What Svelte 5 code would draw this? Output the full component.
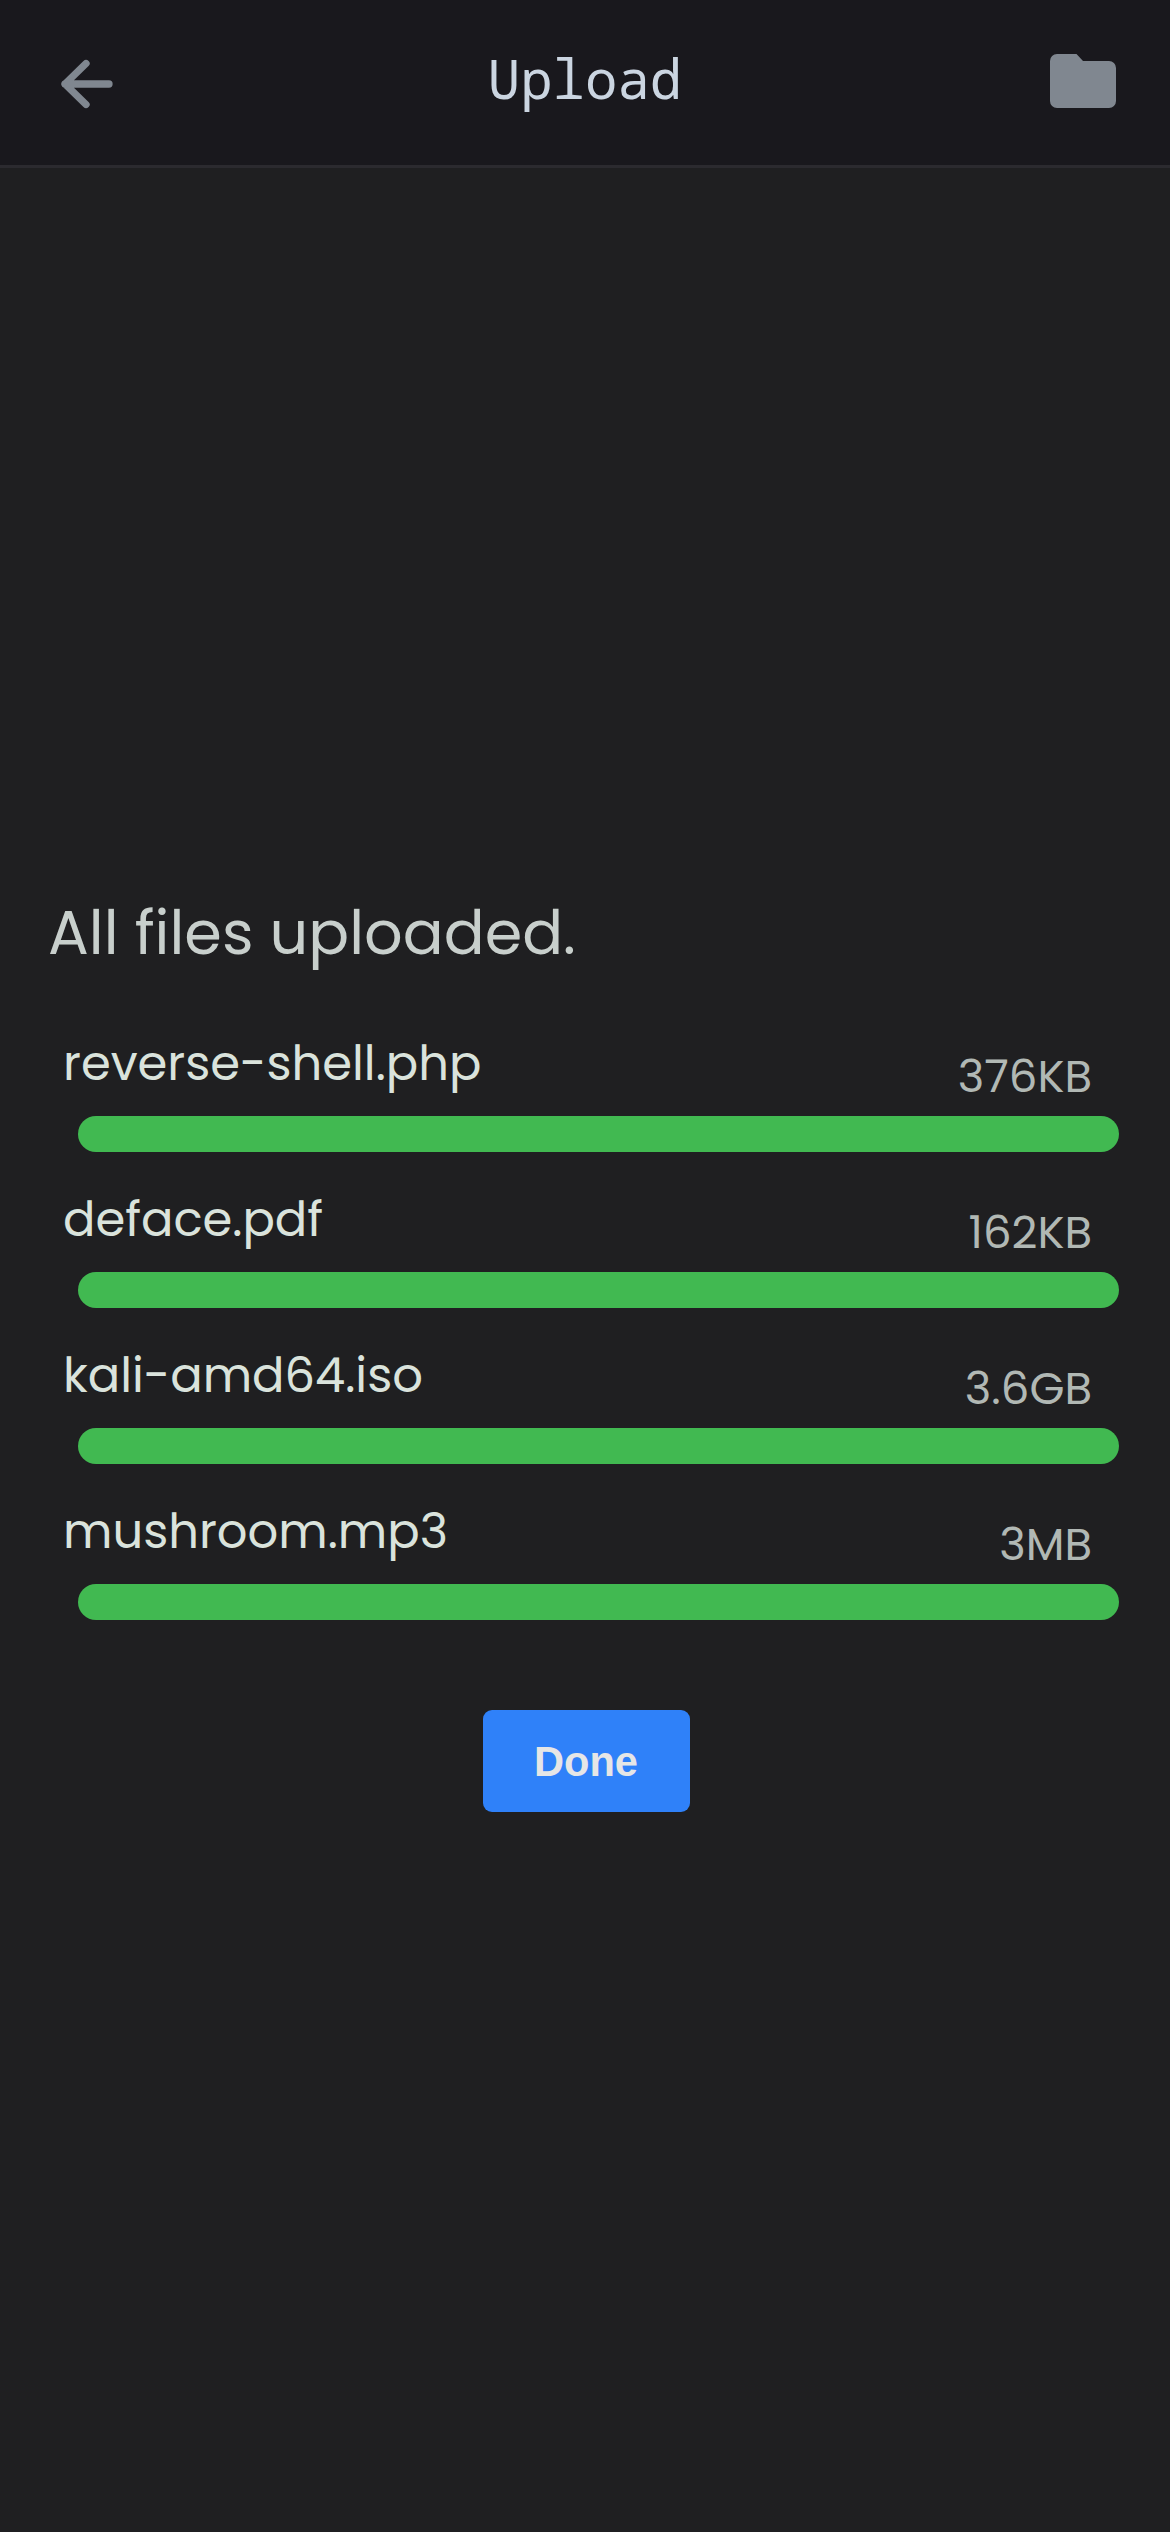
<script>
  const files = [
    { name: 'reverse-shell.php', size: '376KB', progress: 100 },
    { name: 'deface.pdf', size: '162KB', progress: 100 },
    { name: 'kali-amd64.iso', size: '3.6GB', progress: 100 },
    { name: 'mushroom.mp3', size: '3MB', progress: 100 }
  ];
</script>

<div class="screen">
  <header>
    <svg class="back" viewBox="0 0 52 50" aria-label="Back">
      <path d="M48 25H4M25 4.5 4 25l21 20.500" />
    </svg>
    <h1>Upload</h1>
    <svg class="folder" viewBox="0 0 66 54" aria-label="Files">
      <path d="M7 0H26.500L33 7H59a7 7 0 0 1 7 7V47a7 7 0 0 1-7 7H7a7 7 0 0 1-7-7V7a7 7 0 0 1 7-7Z" />
    </svg>
  </header>

  <main>
    <h2>All files uploaded.</h2>
    <ul>
      {#each files as file}
        <li>
          <div class="info">
            <span class="name">{file.name}</span>
            <span class="size">{file.size}</span>
          </div>
          <div class="track"><div class="fill" style="width: {file.progress}%"></div></div>
        </li>
      {/each}
    </ul>
    <button>Done</button>
  </main>
</div>

<style>
  :global(body) {
    margin: 0;
    background: #1f1f21;
  }
  .screen {
    width: 1170px;
    height: 2532px;
    background: #1f1f21;
    font-family: Poppins, Inter, sans-serif;
    overflow: hidden;
  }
  header {
    box-sizing: border-box;
    height: 168px;
    padding: 0 54px 0 61px;
    display: grid;
    grid-template-columns: 65px 1fr 66px;
    align-items: start;
    background: #19181d;
    border-bottom: 3px solid #2b2a2f;
  }
  .back {
    width: 52px;
    height: 50px;
    margin-top: 59px;
    fill: none;
    stroke: #808790;
    stroke-width: 7.3;
    stroke-linecap: round;
    stroke-linejoin: round;
  }
  .folder {
    width: 66px;
    height: 54px;
    margin-top: 54px;
    fill: #808790;
  }
  h1 {
    margin: 42px 0 0;
    padding-right: 6px;
    font: 400 54px/72px 'Noto Sans Mono', 'Liberation Mono', monospace;
    color: #cbd5e1;
    text-align: center;
  }
  main {
    padding: 731px 51px 0 48px;
    display: flex;
    flex-direction: column;
  }
  h2 {
    margin: 0;
    font-size: 60.5px;
    line-height: 68px;
    font-weight: 400;
    color: #c8cfcc;
    white-space: nowrap;
  }
  ul {
    list-style: none;
    margin: 61px 0 0;
    padding: 0 0 0 15px;
    display: flex;
    flex-direction: column;
    gap: 32px;
  }
  .info {
    height: 88px;
    display: flex;
    justify-content: space-between;
    padding-right: 27px;
    white-space: nowrap;
  }
  .name {
    font-size: 48px;
    line-height: 72px;
    color: #dae3dc;
  }
  .size {
    font-size: 45px;
    line-height: 98px;
    color: #b1b8b4;
  }
  .track {
    height: 36px;
    margin-left: 15px;
  }
  .fill {
    height: 36px;
    border-radius: 18px;
    background: #41b951;
  }
  button {
    align-self: center;
    width: 207px;
    height: 102px;
    margin: 90px 0 0 5px;
    padding: 0;
    border: 0;
    border-radius: 9px;
    background: #2f81f9;
    color: #e6e6e6;
    font: 700 41.6px/104px 'Liberation Sans', Arial, sans-serif;
  }
</style>
